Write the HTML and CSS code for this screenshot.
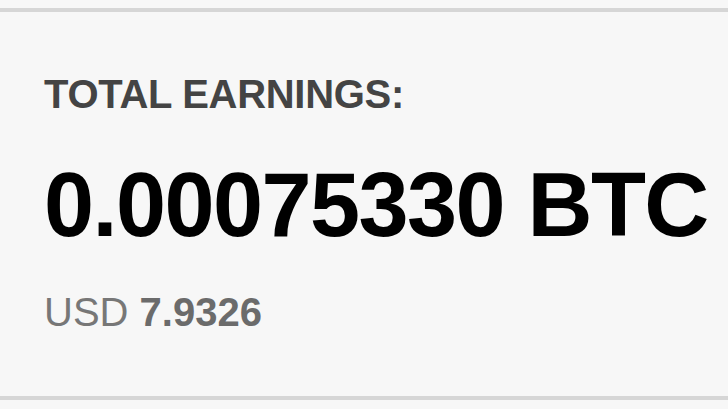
FILE: index.html
```html
<!DOCTYPE html>
<html>
<head>
<meta charset="utf-8">
<link rel="stylesheet" href="styles.css">
</head>
<body>
<div class="card">
  <div class="label">TOTAL EARNINGS:</div>
  <div class="amount">0.00075330 BTC</div>
  <div class="fiat">USD <b class="fiat-value">7.9326</b></div>
</div>
</body>
</html>
```
FILE: styles.css
```css
html, body {
  margin: 0;
  padding: 0;
  background: #f7f7f7;
}
body {
  font-family: "Liberation Sans", Arial, sans-serif;
}
.card {
  margin-top: 8px;
  border-top: 4px solid #d6d6d6;
  border-bottom: 4px solid #d6d6d6;
  background: #f7f7f7;
  padding: 62px 0 0 44px;
  box-sizing: content-box;
  height: 322px;
}
.label {
  font-size: 40px;
  line-height: 40px;
  font-weight: bold;
  letter-spacing: -0.3px;
  color: #444444;
}
.amount {
  margin-top: 46px;
  font-size: 90px;
  line-height: 90px;
  font-weight: bold;
  letter-spacing: -1.55px;
  color: #000000;
}
.fiat {
  margin-top: 42px;
  font-size: 40px;
  line-height: 40px;
  color: #777777;
}
.fiat-value {
  font-weight: bold;
  color: #6b6b6b;
}
```
